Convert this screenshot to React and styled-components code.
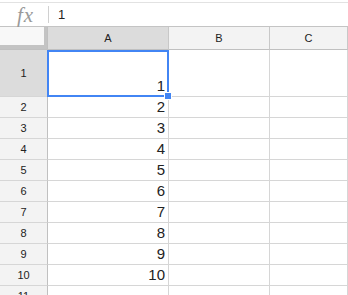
import React from "react";
import styled, { createGlobalStyle } from "styled-components";

const Global = createGlobalStyle`
  html, body { margin: 0; padding: 0; background: #fff; }
  body { font-family: Arial, "Liberation Sans", sans-serif; overflow: hidden; }
`;

const Page = styled.div`
  width: 348px;
  height: 295px;
  overflow: hidden;
  padding-top: 2px;
  box-sizing: border-box;
`;

const FormulaBar = styled.div`
  display: flex;
  align-items: center;
  border-top: 1px solid #e2e2e2;
  border-bottom: 1px solid #c4c4c4;
  box-sizing: border-box;
  height: 25px;
`;

const Fx = styled.div`
  width: 48px;
  box-sizing: border-box;
  padding-left: 17px;
  font-family: "Liberation Serif", "DejaVu Serif", serif;
  font-style: italic;
  font-size: 21px;
  letter-spacing: 1px;
  color: #9a9a9a;
  line-height: 20px;
`;

const Sep = styled.div`
  width: 1px;
  height: 17px;
  background: #d0d0d0;
`;

const FormulaText = styled.div`
  padding-left: 9px;
  font-size: 13px;
  color: #222;
`;

const Grid = styled.div`
  display: grid;
  grid-template-columns: 48px 121px 101px 1fr;
  grid-auto-rows: 21px;
  grid-template-rows: 23px 47px;
`;

const Corner = styled.div`
  background: #c4c4c4;
  border-right: 1px solid #c0c0c0;
  border-bottom: 1px solid #c0c0c0;
  box-sizing: border-box;
  padding: 0 3px 4px 0;
  display: flex;
`;

const CornerInner = styled.div`
  flex: 1;
  background: #f8f8f8;
`;

const ColHead = styled.div`
  background: ${(p) => (p.$sel ? "#dcdcdc" : "#f3f3f3")};
  border-right: 1px solid #c8c8c8;
  border-bottom: 1px solid #c0c0c0;
  box-sizing: border-box;
  display: flex;
  align-items: center;
  justify-content: center;
  font-size: 11px;
  color: #222;
`;

const RowHead = styled.div`
  background: ${(p) => (p.$sel ? "#dcdcdc" : "#f3f3f3")};
  border-right: 1px solid #c0c0c0;
  border-bottom: 1px solid #d6d6d6;
  box-sizing: border-box;
  display: flex;
  align-items: center;
  justify-content: center;
  font-size: 11px;
  color: #222;
`;

const Cell = styled.div`
  position: relative;
  background: #fff;
  border-right: 1px solid #d6d6d6;
  border-bottom: 1px solid #d6d6d6;
  box-sizing: border-box;
  display: flex;
  align-items: flex-end;
  justify-content: flex-end;
  padding: 0 3px 2px 0;
  font-size: 15px;
  line-height: 17px;
  color: #222;
`;

const Selection = styled.div`
  position: absolute;
  left: -1px;
  top: 0;
  right: -1px;
  bottom: -1px;
  border: 2px solid #4285f4;
  pointer-events: none;
`;

const Handle = styled.div`
  position: absolute;
  right: -5px;
  bottom: -5px;
  width: 6px;
  height: 6px;
  background: #4285f4;
  border: 1px solid #fff;
  z-index: 2;
`;

const rows = [1, 2, 3, 4, 5, 6, 7, 8, 9, 10, 11];

export default function App() {
  return (
    <>
      <Global />
      <Page>
        <FormulaBar>
          <Fx>fx</Fx>
          <Sep />
          <FormulaText>1</FormulaText>
        </FormulaBar>
        <Grid>
          <Corner>
            <CornerInner />
          </Corner>
          <ColHead $sel>A</ColHead>
          <ColHead>B</ColHead>
          <ColHead>C</ColHead>
          {rows.map((r) => (
            <React.Fragment key={r}>
              <RowHead $sel={r === 1}>{r}</RowHead>
              <Cell>
                {r <= 10 ? r : ""}
                {r === 1 && (
                  <Selection>
                    <Handle />
                  </Selection>
                )}
              </Cell>
              <Cell />
              <Cell />
            </React.Fragment>
          ))}
        </Grid>
      </Page>
    </>
  );
}
